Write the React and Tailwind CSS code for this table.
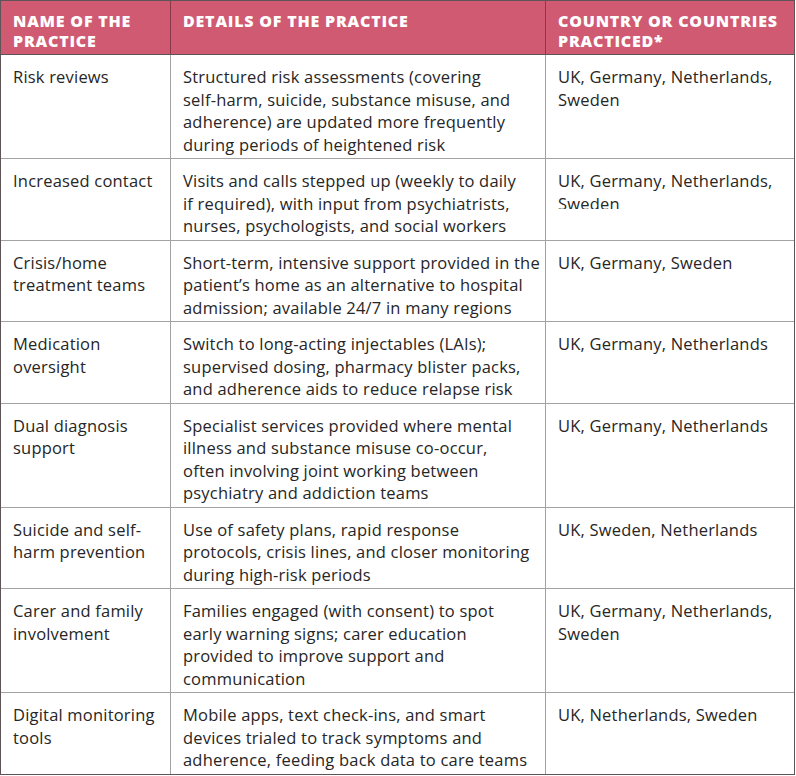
import React from "react";

const rows = [
  {
    name: ["Risk reviews"],
    details: [
      "Structured risk assessments (covering",
      "self-harm, suicide, substance misuse, and",
      "adherence) are updated more frequently",
      "during periods of heightened risk",
    ],
    countries: ["UK, Germany, Netherlands,", "Sweden"],
  },
  {
    name: ["Increased contact"],
    details: [
      "Visits and calls stepped up (weekly to daily",
      "if required), with input from psychiatrists,",
      "nurses, psychologists, and social workers",
    ],
    countries: ["UK, Germany, Netherlands,", "Sweden"],
    clip: true,
  },
  {
    name: ["Crisis/home", "treatment teams"],
    details: [
      "Short-term, intensive support provided in the",
      "patient\u2019s home as an alternative to hospital",
      "admission; available 24/7 in many regions",
    ],
    countries: ["UK, Germany, Sweden"],
  },
  {
    name: ["Medication", "oversight"],
    details: [
      "Switch to long-acting injectables (LAIs);",
      "supervised dosing, pharmacy blister packs,",
      "and adherence aids to reduce relapse risk",
    ],
    countries: ["UK, Germany, Netherlands"],
  },
  {
    name: ["Dual diagnosis", "support"],
    details: [
      "Specialist services provided where mental",
      "illness and substance misuse co-occur,",
      "often involving joint working between",
      "psychiatry and addiction teams",
    ],
    countries: ["UK, Germany, Netherlands"],
  },
  {
    name: ["Suicide and self-", "harm prevention"],
    details: [
      "Use of safety plans, rapid response",
      "protocols, crisis lines, and closer monitoring",
      "during high-risk periods",
    ],
    countries: ["UK, Sweden, Netherlands"],
  },
  {
    name: ["Carer and family", "involvement"],
    details: [
      "Families engaged (with consent) to spot",
      "early warning signs; carer education",
      "provided to improve support and",
      "communication",
    ],
    countries: ["UK, Germany, Netherlands,", "Sweden"],
  },
  {
    name: ["Digital monitoring", "tools"],
    details: [
      "Mobile apps, text check-ins, and smart",
      "devices trialed to track symptoms and",
      "adherence, feeding back data to care teams",
    ],
    countries: ["UK, Netherlands, Sweden"],
  },
];

function Lines({ lines }) {
  return (
    <>
      {lines.map((l, i) => (
        <div key={i} className="whitespace-nowrap">
          {l}
        </div>
      ))}
    </>
  );
}

export default function App() {
  return (
    <div className="bg-white w-[796px] h-[776px] overflow-hidden">
      <div
        className="w-[795px] border border-[#5e5356] text-[16.5px] tracking-[0.2px] leading-[22.5px] text-[#262626]"
        style={{ fontFamily: "'Open Sans', Lato, sans-serif" }}
      >
        <div className="grid grid-cols-[170px_375px_1fr] bg-[#d05a72] text-white text-[16px] font-extrabold uppercase tracking-[0.05em] leading-[20px] border-b border-[#5e5356]">
          <div className="pl-3 pt-[10px] pb-[3px] border-r border-[#8a3a4c]">
            <div>Name of the</div>
            <div>Practice</div>
          </div>
          <div className="pl-3 pt-[10px] pb-[3px] border-r border-[#8a3a4c]">
            <div>Details of the practice</div>
          </div>
          <div className="pl-3 pt-[10px] pb-[3px]">
            <div>Country or countries</div>
            <div>practiced*</div>
          </div>
        </div>
        {rows.map((r, i) => (
          <div
            key={i}
            className={
              "grid grid-cols-[170px_375px_1fr] " +
              (i < rows.length - 1 ? "border-b border-[#a3a3a3]" : "")
            }
          >
            <div className="pl-3 pt-[11px] pb-[2px] border-r border-[#a3a3a3]">
              <Lines lines={r.name} />
            </div>
            <div className="pl-3 pt-[11px] pb-[2px] border-r border-[#a3a3a3]">
              <Lines lines={r.details} />
            </div>
            <div className="pl-3 pt-[11px] pb-[2px]">
              {r.clip ? (
                <div className="h-[39px] overflow-hidden">
                  <Lines lines={r.countries} />
                </div>
              ) : (
                <Lines lines={r.countries} />
              )}
            </div>
          </div>
        ))}
      </div>
    </div>
  );
}
